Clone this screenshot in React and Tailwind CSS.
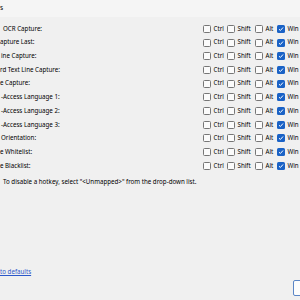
const rows = [
  { label: "OCR Capture:", pad: "pl-[3px]" },
  { label: "apture Last:", pad: "pl-0" },
  { label: "ine Capture:", pad: "pl-[1px]" },
  { label: "rd Text Line Capture:", pad: "pl-0" },
  { label: "e Capture:", pad: "pl-0" },
  { label: "-Access Language 1:", pad: "pl-[1px]" },
  { label: "-Access Language 2:", pad: "pl-[1px]" },
  { label: "-Access Language 3:", pad: "pl-[1px]" },
  { label: "Orientation:", pad: "pl-[1px]" },
  { label: "e Whitelist:", pad: "pl-0" },
  { label: "e Blacklist:", pad: "pl-0" },
];

function Box({ checked }) {
  if (checked) {
    return (
      <span className="flex h-[8px] w-[8px] shrink-0 items-center justify-center rounded-[1.5px] bg-[#1a62c6]">
        <svg width="6" height="6" viewBox="0 0 6 6">
          <path d="M1 3.2 L2.4 4.5 L5 1.5" stroke="white" strokeWidth="1" fill="none" />
        </svg>
      </span>
    );
  }
  return <span className="h-[8px] w-[8px] shrink-0 rounded-[1.5px] border border-[#767676] bg-[#fbfbfb]" />;
}

function Check({ label, checked, w }) {
  return (
    <div className={`flex shrink-0 items-center gap-[2.5px] ${w}`}>
      <Box checked={checked} />
      <span>{label}</span>
    </div>
  );
}

export default function App() {
  return (
    <div className="relative h-[300px] w-[300px] overflow-hidden bg-[#f0f0f0] text-[6.2px] leading-none text-black [font-family:'Noto_Sans',sans-serif]">
      <div className="flex h-[17px] items-center bg-[#f5f5f5] text-[6.5px]">s</div>
      <div className="mt-[5px] flex flex-col">
        {rows.map((r, i) => (
          <div key={i} className="flex h-[13.7px] items-center">
            <div className={`w-[203px] shrink-0 ${r.pad}`}>{r.label}</div>
            <Check label="Ctrl" w="w-[24px]" />
            <Check label="Shift" w="w-[28px]" />
            <Check label="Alt" w="w-[22px]" />
            <Check label="Win" checked w="w-[23px]" />
          </div>
        ))}
      </div>
      <div className="mt-[6px] pl-[3px]">
        To disable a hotkey, select "&lt;Unmapped&gt;" from the drop-down list.
      </div>
      <div className="mt-[84px] text-[#2b57c9] underline">to defaults</div>
      <div className="absolute left-[293px] top-[280px] h-[16px] w-[20px] rounded-[2px] border border-[#5b86c6] bg-[#fdfdfd]" />
    </div>
  );
}
